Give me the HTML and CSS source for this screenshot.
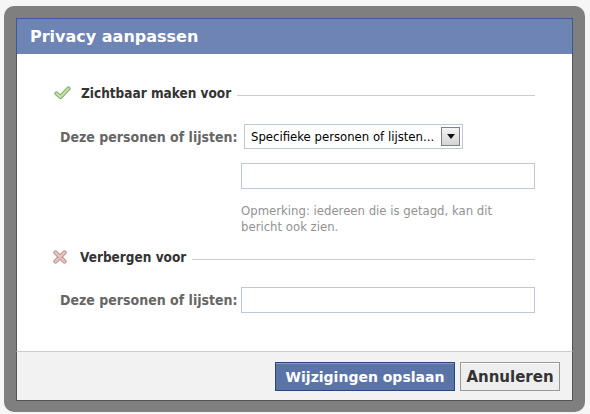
FILE: index.html
```html
<!DOCTYPE html>
<html lang="nl">
<head>
<meta charset="utf-8">
<title>Privacy aanpassen</title>
<link rel="stylesheet" href="styles.css">
</head>
<body>
<div class="frame">
  <div class="dialog">
    <div class="header"><h2 class="title">Privacy aanpassen</h2></div>
    <div class="content">
      <div class="section-head">
        <svg class="icon" width="17" height="14" viewBox="0 0 17 14">
          <polyline points="2.5,7.5 6.5,11 14.5,2.5" fill="none" stroke="#86ad6a" stroke-width="4.2" stroke-linecap="round" stroke-linejoin="round"/>
          <polyline points="2.5,7.5 6.5,11 14.5,2.5" fill="none" stroke="#c4e3a6" stroke-width="2" stroke-linecap="round" stroke-linejoin="round"/>
        </svg>
        <span class="head-text">Zichtbaar maken voor</span>
        <span class="rule"></span>
      </div>
      <div class="form">
        <label class="label">Deze personen of lijsten:</label>
        <div class="select">
          <span class="select-text">Specifieke personen of lijsten...</span>
          <span class="select-btn"><span class="arrow"></span></span>
        </div>
        <span></span>
        <div class="input input-gap"></div>
        <span></span>
        <p class="note">Opmerking: iedereen die is getagd, kan dit bericht ook zien.</p>
      </div>
      <div class="section-head second">
        <svg class="icon icon-x" width="14" height="14" viewBox="0 0 14 14">
          <path d="M2.5,2.5 L11.5,11.5 M11.5,2.5 L2.5,11.5" fill="none" stroke="#b79a98" stroke-width="4.4" stroke-linecap="round"/>
          <path d="M2.5,2.5 L11.5,11.5 M11.5,2.5 L2.5,11.5" fill="none" stroke="#eec2bd" stroke-width="2.2" stroke-linecap="round"/>
        </svg>
        <span class="head-text">Verbergen voor</span>
        <span class="rule"></span>
      </div>
      <div class="form form-last">
        <label class="label">Deze personen of lijsten:</label>
        <div class="input"></div>
      </div>
    </div>
    <div class="footer">
      <button class="btn btn-primary">Wijzigingen opslaan</button>
      <button class="btn btn-cancel">Annuleren</button>
    </div>
  </div>
</div>
</body>
</html>
```

FILE: styles.css
```css
html, body {
  margin: 0;
  padding: 0;
  background: #f6f6f6;
  font-family: Tahoma, "DejaVu Sans", Verdana, sans-serif;
}

.frame {
  margin: 6px 5px 2px 4px;
  height: 406px;
  box-sizing: border-box;
  background: #7f7f7f;
  border-radius: 10px;
  padding: 12px 12px 11px 12px;
}

.dialog {
  display: flex;
  flex-direction: column;
  height: 383px;
  background: #fff;
}

.header {
  height: 36px;
  box-sizing: border-box;
  background: #6d84b4;
  border: 1px solid #3b5998;
  border-bottom: none;
  display: flex;
  align-items: center;
  padding-left: 13px;
}

.title {
  margin: 0;
  color: #fff;
  font-size: 16px;
  font-weight: bold;
}

.content {
  flex: 1;
  border-left: 1px solid #555;
  border-right: 1px solid #555;
  padding: 30px 37px 0 37px;
  font-family: "DejaVu Sans Condensed", "DejaVu Sans", sans-serif;
  font-stretch: condensed;
}

.section-head {
  display: flex;
  align-items: center;
  height: 18px;
}

.section-head.second {
  margin-top: 13px;
}

.icon {
  flex: none;
  margin-left: 0;
  margin-right: 10px;
}

.icon-x {
  margin-left: -1px;
  margin-right: 13px;
}

.head-text {
  font-size: 13.5px;
  font-weight: bold;
  color: #333;
  white-space: nowrap;
}

.rule {
  flex: 1;
  height: 1px;
  background: #ccc;
  margin-left: 6px;
  margin-top: 5px;
}

.form {
  display: grid;
  grid-template-columns: 187px 294px;
  align-items: center;
  margin-top: 22px;
}

.form-last {
  margin-top: 21px;
}

.label {
  padding-left: 6px;
  font-size: 14px;
  font-weight: bold;
  color: #666;
  white-space: nowrap;
}

.select {
  margin-left: 3px;
  width: 219px;
  height: 25px;
  box-sizing: border-box;
  border: 1px solid #bdc7d8;
  display: flex;
  align-items: center;
  justify-content: space-between;
  padding: 0 2px 0 6px;
}

.select-text {
  font-size: 13px;
  color: #000;
  white-space: nowrap;
}

.select-btn {
  width: 19px;
  height: 19px;
  box-sizing: border-box;
  border: 1px solid #808080;
  background: linear-gradient(#f4f4f4, #d4d4d4);
  display: flex;
  align-items: center;
  justify-content: center;
}

.arrow {
  width: 0;
  height: 0;
  border-left: 4px solid transparent;
  border-right: 4px solid transparent;
  border-top: 5px solid #111;
}

.input {
  height: 26px;
  box-sizing: border-box;
  border: 1px solid #bdc7d8;
  background: #fff;
}

.input-gap {
  margin-top: 14px;
}

.note {
  margin: 14px 0 0 0;
  max-width: 280px;
  font-size: 13px;
  line-height: 16px;
  color: #929292;
}

.footer {
  height: 50px;
  box-sizing: border-box;
  background: #f2f2f2;
  border: 1px solid #555;
  border-top: 1px solid #ccc;
  display: flex;
  justify-content: flex-end;
  align-items: flex-start;
  padding: 10px 12px 0 0;
  gap: 5px;
}

.btn {
  height: 29px;
  box-sizing: border-box;
  font-family: Tahoma, "DejaVu Sans", Verdana, sans-serif;
  font-size: 14px;
  font-weight: bold;
  padding: 0 5px;
  margin: 0;
  cursor: pointer;
}

.btn-primary {
  width: 180px;
  background: #5b74a8;
  border: 1px solid #29447e;
  box-shadow: inset 0 1px 0 #8a9cc2;
  color: #fff;
}

.btn-cancel {
  width: 100px;
  background: #eeeeee;
  border: 1px solid #999;
  box-shadow: inset 0 1px 0 #fff;
  color: #333;
  font-size: 15px;
}
```
